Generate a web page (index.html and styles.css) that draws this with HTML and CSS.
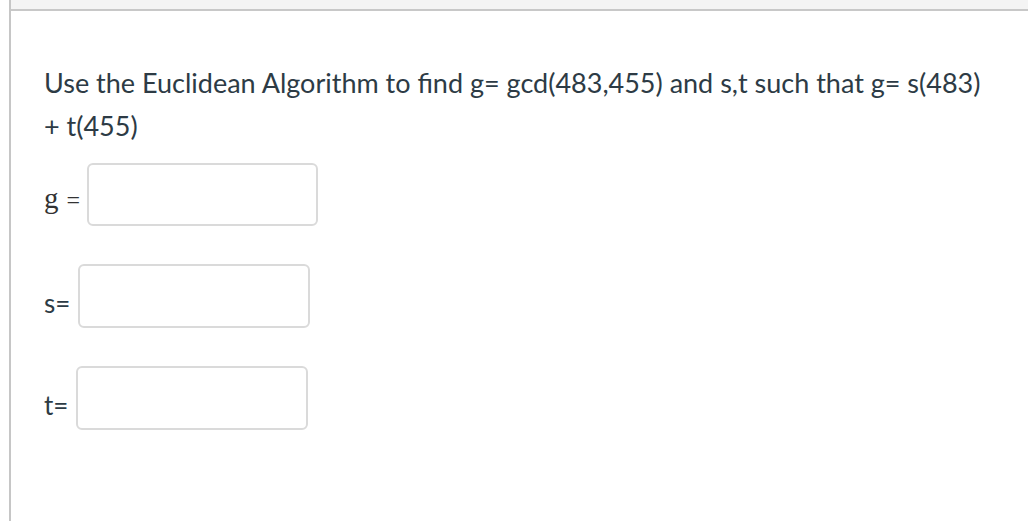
FILE: index.html
```html
<!DOCTYPE html>
<html>
<head>
<meta charset="utf-8">
<link rel="stylesheet" href="styles.css">
</head>
<body>
<div class="card">
  <div class="card-header"></div>
  <div class="card-body">
    <p class="question">Use the Euclidean Algorithm to find g= gcd(483,455) and s,t such that g= s(483) + t(455)</p>
    <div class="answers">
      <div class="answer-row row-g">
        <span class="label math"><span class="math-var">g</span><span class="math-eq">=</span></span>
        <input class="answer-input" type="text">
      </div>
      <div class="answer-row row-s">
        <span class="label">s=</span>
        <input class="answer-input" type="text">
      </div>
      <div class="answer-row row-t">
        <span class="label">t=</span>
        <input class="answer-input" type="text">
      </div>
    </div>
  </div>
</div>
</body>
</html>
```

FILE: styles.css
```css
html, body {
  margin: 0;
  padding: 0;
  background: #ffffff;
}
body {
  font-family: Lato, "Open Sans", sans-serif;
  color: #2d3b45;
  overflow: hidden;
}
.card {
  margin-left: 9px;
  border-left: 2px solid #c6c6c6;
  min-height: 521px;
}
.card-header {
  height: 9px;
  background: #f4f4f4;
  border-bottom: 2px solid #c8c8c8;
}
.card-body {
  padding: 50px 20px 0 33px;
}
.question {
  margin: 0;
  font-size: 27px;
  line-height: 43px;
  max-width: 940px;
}
.answers {
  display: flex;
  flex-direction: column;
  gap: 38px;
  margin-top: 16px;
}
.answer-row {
  display: flex;
  align-items: flex-end;
}
.label {
  font-size: 26px;
  line-height: 30px;
  margin-bottom: 10px;
  margin-right: 8px;
  color: #2d3b45;
}
.label.math {
  font-family: "Liberation Serif", "DejaVu Serif", serif;
  font-size: 29px;
  color: #333;
  margin-right: 7px;
  margin-bottom: 11px;
}
.math-eq {
  font-size: 24px;
  margin-left: 8px;
}
.answer-input {
  box-sizing: border-box;
  width: 231px;
  height: 63px;
  border: 2px solid #dadada;
  border-radius: 6px;
  background: #fff;
  margin: 0;
  padding: 0 8px;
  outline: none;
}
.row-s .answer-input,
.row-t .answer-input {
  width: 232px;
  height: 64px;
}
```
